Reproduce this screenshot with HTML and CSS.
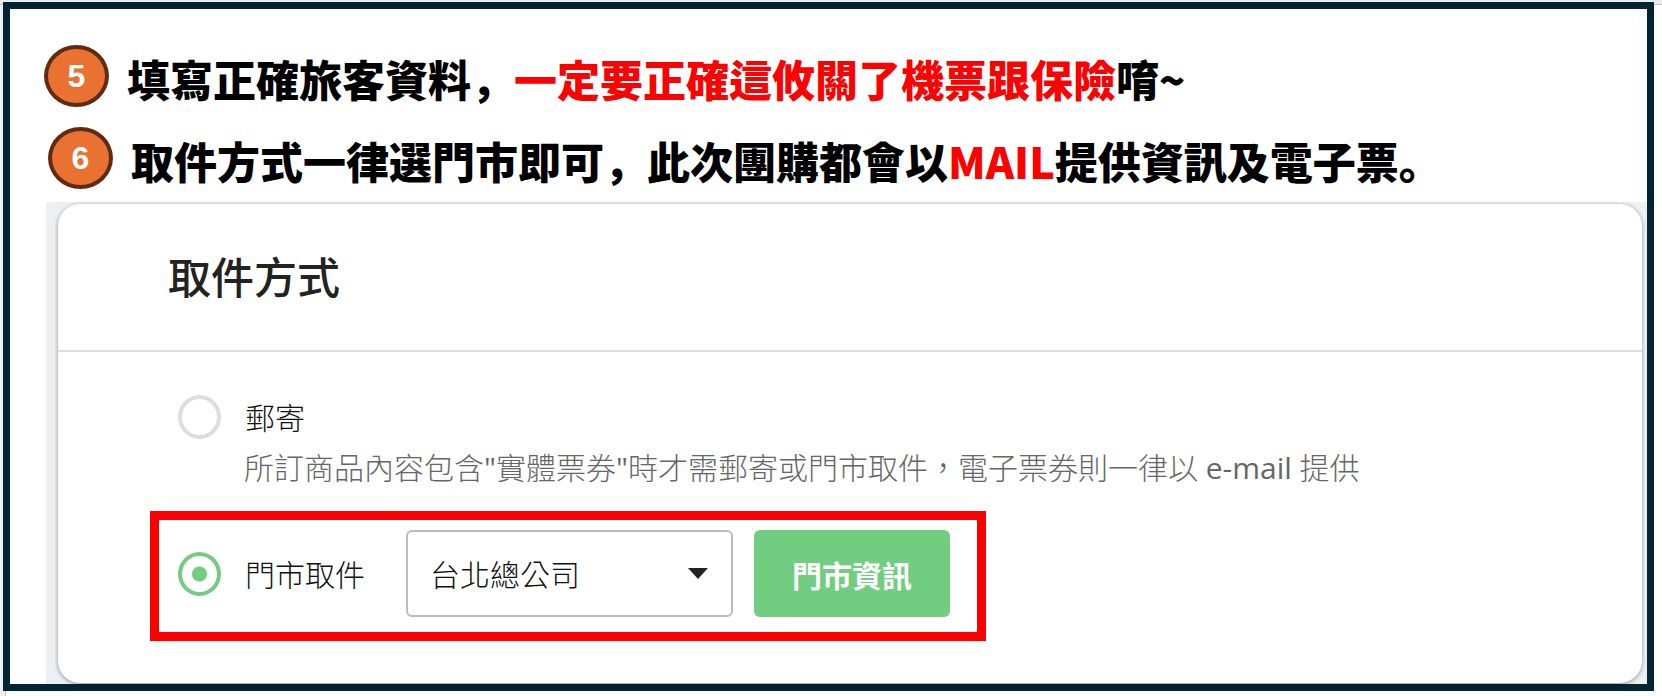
FILE: index.html
```html
<!DOCTYPE html>
<html lang="zh-Hant">
<head>
<meta charset="utf-8">
<meta name="viewport" content="width=device-width, initial-scale=1">
<title>取件方式</title>
<link rel="stylesheet" href="styles.css">
</head>
<body class="page">
<main class="frame">
  <ol class="steps">
    <li class="step">
      <span class="step-number">5</span>
      <p class="step-text" lang="ja">填寫正確旅客資料，<em class="highlight">一定要正確這攸關了機票跟保險</em>唷~</p>
    </li>
    <li class="step step-inset">
      <span class="step-number">6</span>
      <p class="step-text" lang="ja">取件方式一律選門市即可，此次團購都會以<em class="highlight">MAIL</em>提供資訊及電子票。</p>
    </li>
  </ol>
  <section class="backdrop">
    <form class="card">
      <h2 class="card-title">取件方式</h2>
      <div class="options">
        <div class="option">
          <input class="radio" type="radio" name="pickup" id="by-mail">
          <label class="option-label" for="by-mail">郵寄</label>
        </div>
        <p class="option-note">所訂商品內容包含<span class="latin">"</span>實體票券<span class="latin">"</span>時才需郵寄或門市取件，電子票券則一律以<span class="latin"> e-mail </span>提供</p>
        <div class="option marked">
          <input class="radio" type="radio" name="pickup" id="by-store" checked>
          <label class="option-label" for="by-store">門市取件</label>
          <div class="select-wrap">
            <select class="select" aria-label="門市">
              <option>台北總公司</option>
            </select>
            <svg class="caret" viewBox="0 0 20 11" aria-hidden="true"><path d="M0 0h20L10 11z"/></svg>
          </div>
          <button class="button" type="button">門市資訊</button>
        </div>
      </div>
    </form>
  </section>
</main>
</body>
</html>
```
FILE: styles.css
```css
* {
  box-sizing: border-box;
}

.page {
  margin: 0;
  min-height: 100vh;
  display: flex;
  padding: 2px 8px 5px 3px;
  background:
    linear-gradient(#ebedec, #ebedec) 0 0 / 100% 4px no-repeat,
    linear-gradient(#c4c4c4, #c4c4c4) 0 4px / 100% 1px no-repeat,
    linear-gradient(#eeefef, #eeefef) 0 0 / 5px 100% no-repeat,
    linear-gradient(#c4c4c4, #c4c4c4) 5px 0 / 1px 100% no-repeat,
    #fff;
  font-family: "Open Sans", "Noto Sans CJK TC", sans-serif;
  color: #111;
}

.frame {
  flex: 1;
  min-width: 0;
  display: flex;
  flex-direction: column;
  border: 7px solid #032433;
  background: #fff;
}

.steps {
  display: flex;
  flex-direction: column;
  gap: 20px;
  margin: 0;
  padding: 36px 0 13px 34px;
  list-style: none;
}

.step {
  display: flex;
  align-items: center;
  gap: 18px;
}

.step-inset {
  padding-left: 4px;
}

.step-number {
  flex: none;
  display: flex;
  align-items: center;
  justify-content: center;
  width: 65px;
  height: 62px;
  border: 4px solid #622b10;
  border-radius: 50%;
  background: #e97132;
  color: #fff;
  font: bold 32px "Liberation Sans", sans-serif;
}

.step-text {
  margin: 0;
  padding-top: 4px;
  font-family: "Noto Sans CJK JP", sans-serif;
  font-size: 43px;
  font-weight: 900;
  line-height: 56px;
  color: #000;
}

.highlight {
  font-style: normal;
  color: #f00;
}

.backdrop {
  flex: 1;
  display: flex;
  margin-left: 36px;
  padding: 2px 5px 1px 12px;
  background: #ecf0f1;
}

.card {
  flex: 1;
  min-width: 0;
  border-radius: 22px;
  background: #fff;
  box-shadow: 0 1px 4px rgba(0, 0, 0, 0.4);
}

.card-title {
  margin: 0;
  padding: 45px 110px 43px;
  border-bottom: 2px solid #dcdddd;
  font-size: 43px;
  font-weight: 500;
  line-height: 58px;
  color: #222;
}

.options {
  padding: 43px 92px 42px;
}

.option {
  display: flex;
  align-items: center;
  padding-left: 28px;
}

.radio {
  appearance: none;
  flex: none;
  width: 43px;
  height: 44px;
  margin: 0 24px 0 0;
  border: 4px solid #ddd;
  border-radius: 50%;
  background: #fff;
}

.radio:checked {
  border-color: #7ac885;
  background: radial-gradient(circle, #72cd7f 7px, #fff 8px);
}

.option-label {
  padding-top: 2px;
  font-size: 30px;
  font-weight: 300;
  line-height: 42px;
}

.option-note {
  margin: 6px 0 20px;
  padding-left: 94px;
  font-size: 30px;
  font-weight: 300;
  line-height: 46px;
  color: #666;
}

.latin {
  font-weight: 400;
}

.marked {
  width: fit-content;
  padding: 10px 27px 15px 19px;
  border: 9px solid #f00;
}

.select-wrap {
  position: relative;
  margin: 0 21px 0 41px;
}

.select {
  appearance: none;
  display: block;
  width: 327px;
  height: 87px;
  padding: 2px 22px 0;
  border: 2px solid #bbb;
  border-radius: 6px;
  background: #fff;
  color: #111;
  font-family: inherit;
  font-size: 30px;
  font-weight: 300;
}

.caret {
  position: absolute;
  top: 38px;
  right: 25px;
  width: 20px;
  height: 11px;
  fill: #222;
  pointer-events: none;
}

.button {
  width: 196px;
  height: 87px;
  padding: 0;
  border: 0;
  border-radius: 6px;
  background: #71cd7f;
  color: #fff;
  font-family: inherit;
  font-size: 30px;
  font-weight: 700;
}
```
